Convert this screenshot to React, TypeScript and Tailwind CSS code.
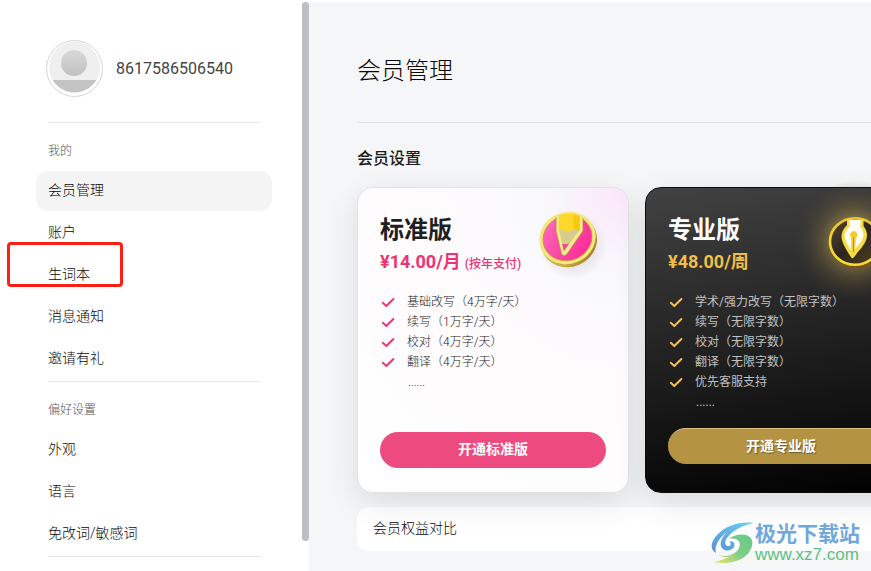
import React, { useState } from 'react';

interface Plan {
  id: string;
  name: string;
  price: string;
  note?: string;
  features: string[];
  action: string;
}

const ACCOUNT_LINKS = ['会员管理', '账户', '生词本', '消息通知', '邀请有礼'];
const PREFERENCE_LINKS = ['外观', '语言', '免改词/敏感词'];

const STANDARD: Plan = {
  id: 'standard',
  name: '标准版',
  price: '¥14.00/月',
  note: '(按年支付)',
  features: ['基础改写（4万字/天）', '续写（1万字/天）', '校对（4万字/天）', '翻译（4万字/天）'],
  action: '开通标准版',
};

const PRO: Plan = {
  id: 'pro',
  name: '专业版',
  price: '¥48.00/周',
  features: [
    '学术/强力改写（无限字数）',
    '续写（无限字数）',
    '校对（无限字数）',
    '翻译（无限字数）',
    '优先客服支持',
  ],
  action: '开通专业版',
};

const Avatar: React.FC = () => (
  <svg viewBox="0 0 57 57" className="h-[57px] w-[57px] shrink-0" aria-hidden="true">
    <defs>
      <linearGradient id="avatarHead" x1="0" y1="0" x2="0" y2="1">
        <stop offset="0" stopColor="#d9d9d9" />
        <stop offset="1" stopColor="#c0c0c0" />
      </linearGradient>
      <clipPath id="avatarClip">
        <circle cx="28.5" cy="27" r="25.5" />
      </clipPath>
    </defs>
    <circle cx="28.5" cy="28.5" r="28" fill="#fff" stroke="#d6d6d6" />
    <g clipPath="url(#avatarClip)">
      <rect width="57" height="57" fill="#efefef" />
      <rect y="40" width="57" height="17" fill="#c4c4c4" />
    </g>
    <circle cx="28" cy="23" r="13" fill="url(#avatarHead)" />
  </svg>
);

const Check: React.FC<{ className: string }> = ({ className }) => (
  <svg viewBox="0 0 16 16" fill="none" className={`h-4 w-4 shrink-0 ${className}`} aria-hidden="true">
    <path d="M2.8 8.8 6.3 12 13.4 5" stroke="currentColor" strokeWidth="1.9" strokeLinecap="round" strokeLinejoin="round" />
  </svg>
);

const PencilMedal: React.FC = () => (
  <svg viewBox="0 0 80 80" className="h-20 w-20" aria-hidden="true">
    <defs>
      <linearGradient id="pinkFace" x1="0" y1="0" x2="1" y2="1">
        <stop offset="0" stopColor="#ff70be" />
        <stop offset="0.5" stopColor="#fb45a5" />
        <stop offset="1" stopColor="#fb2594" />
      </linearGradient>
      <linearGradient id="pinkEdge" x1="0" y1="0" x2="1" y2="1">
        <stop offset="0" stopColor="#e9dc70" />
        <stop offset="0.6" stopColor="#c5a83b" />
        <stop offset="1" stopColor="#8f7420" />
      </linearGradient>
      <radialGradient id="pinkShadow">
        <stop offset="0.4" stopColor="#bba6b0" stopOpacity="0.35" />
        <stop offset="1" stopColor="#bba6b0" stopOpacity="0" />
      </radialGradient>
      <clipPath id="pinkClip">
        <ellipse cx="37.5" cy="38" rx="26" ry="24" transform="rotate(-22 37.5 38)" />
      </clipPath>
    </defs>
    <circle cx="43" cy="46" r="34" fill="url(#pinkShadow)" />
    <ellipse cx="38.8" cy="40.8" rx="28.6" ry="26" transform="rotate(-22 38.8 40.8)" fill="url(#pinkEdge)" />
    <ellipse cx="37.5" cy="38" rx="28.6" ry="26" transform="rotate(-22 37.5 38)" fill="#f2e783" />
    <ellipse cx="37.5" cy="38" rx="24.8" ry="22.4" transform="rotate(-22 37.5 38)" fill="url(#pinkFace)" stroke="#c99335" strokeWidth="0.8" />
    <g clipPath="url(#pinkClip)">
      <path d="M26 12V31L31.5 54Q34 57.5 37 54L53 31V12Z" fill="#f5ea8c" stroke="#b98445" strokeWidth="0.8" />
      <path d="M29 12V30L34 51L49.6 30V12Z" fill="#d8cb8e" />
      <path d="M28.8 12V30Q31 28 34 31Q38 33 41 30Q44 29 49.8 30V12Z" fill="#ffd62a" />
      <path d="M43.5 12V29.5L49.8 30V12Z" fill="#fbc60d" />
      <path d="M32.1 43.5Q35 45 39.2 43.5L34 51Z" fill="#f0449b" />
    </g>
  </svg>
);

const PenMedal: React.FC = () => (
  <svg viewBox="0 0 120 120" className="h-[120px] w-[120px]" aria-hidden="true">
    <defs>
      <radialGradient id="goldGlow">
        <stop offset="0.3" stopColor="#a59154" stopOpacity="0.8" />
        <stop offset="0.6" stopColor="#7b6b3c" stopOpacity="0.4" />
        <stop offset="1" stopColor="#4a4230" stopOpacity="0" />
      </radialGradient>
      <linearGradient id="goldFace" x1="0" y1="0" x2="1" y2="1">
        <stop offset="0" stopColor="#55482f" />
        <stop offset="0.5" stopColor="#2c251d" />
        <stop offset="1" stopColor="#594222" />
      </linearGradient>
      <linearGradient id="goldRim" x1="0" y1="0" x2="0" y2="1">
        <stop offset="0" stopColor="#eec52c" />
        <stop offset="1" stopColor="#f6df38" />
      </linearGradient>
    </defs>
    <circle cx="60" cy="60" r="60" fill="url(#goldGlow)" />
    <ellipse cx="61" cy="62.5" rx="26.5" ry="24.5" fill="#805108" />
    <ellipse cx="60" cy="60.5" rx="25" ry="23.3" fill="url(#goldFace)" stroke="url(#goldRim)" strokeWidth="2.6" />
    <path d="M52 38.5V44Q46 50 46.5 57Q48 65 57 77.5Q59 77 62 72Q73 61 72 53Q71 48 68.5 45V38.5Z" fill="#f6dc42" />
    <path d="M54.5 39V46Q49.5 50 49.5 56Q51 62 56 69V56.5A3.7 3.7 0 1 1 61.5 56.5L60 68Q68 60 68.5 54Q68 49 65.5 46V39Z" fill="#fffdf6" />
    <circle cx="59" cy="53.5" r="3" fill="#f4cb2c" />
    <path d="M58.5 56V71" stroke="#b69124" strokeWidth="1.2" />
  </svg>
);

const NavList: React.FC<{
  items: string[];
  current: string;
  onSelect: (item: string) => void;
}> = ({ items, current, onSelect }) => (
  <ul className="flex flex-col gap-[2px]">
    {items.map((item) => (
      <li key={item} className="relative">
        <button
          type="button"
          onClick={() => onSelect(item)}
          className={`flex h-10 w-full items-center rounded-xl px-3 pb-[2px] text-left text-sm ${
            item === current ? 'bg-[#f4f4f4]' : ''
          }`}
        >
          {item}
        </button>
        {item === '生词本' && (
          <span className="pointer-events-none absolute -left-[29px] -top-[13px] h-[45px] w-[116px] rounded-[4px] border-3 border-[#ff2015]" />
        )}
      </li>
    ))}
  </ul>
);

const PlanCard: React.FC<{ plan: Plan; dark?: boolean }> = ({ plan, dark = false }) => (
  <article
    className={`relative flex min-h-[306px] w-[272px] shrink-0 flex-col rounded-2xl border px-[22px] pt-[25px] shadow-[0_10px_32px_rgba(0,0,0,0.11)] ${
      dark
        ? 'border-[#0c0c0c] bg-[linear-gradient(170deg,#424242,#212121_50%,#000000)] pb-7'
        : 'border-[#e2e2e5] bg-[radial-gradient(circle_at_100%_0%,#fbe5fa_0%,#f8f8fc_20%,#fefbfd_45%,#ffffff_100%)] pb-6'
    }`}
  >
    <div className={dark ? 'absolute -top-[7px] left-[149px]' : 'absolute top-3 left-[172px]'}>
      {dark ? <PenMedal /> : <PencilMedal />}
    </div>
    <h3 className={`relative text-2xl leading-[34px] font-bold ${dark ? 'text-white' : 'text-[#1f1f1f]'}`}>
      {plan.name}
    </h3>
    <p className={`relative text-lg leading-[30px] font-bold ${dark ? 'text-[#f3bd47]' : 'text-[#ed3472]'}`}>
      {plan.price}
      {plan.note && <span className="ml-1 text-xs font-medium">{plan.note}</span>}
    </p>
    <ul className={`relative mt-[15px] text-xs leading-5 ${dark ? 'font-normal text-[#c0c0c0]' : 'text-[#222]'}`}>
      {plan.features.map((feature) => (
        <li key={feature} className="flex items-center gap-[11px] whitespace-nowrap">
          <Check className={dark ? 'text-[#f8c44d]' : 'text-[#ed3472]'} />
          {feature}
        </li>
      ))}
      <li className="pl-7">......</li>
    </ul>
    <button
      type="button"
      className={`relative mt-auto h-9 w-full rounded-full pb-[2px] text-sm font-bold text-white ${
        dark
          ? 'border-t border-[#e2c17c] bg-[#b49442] [text-shadow:1px_1px_1px_rgba(0,0,0,0.4)]'
          : 'bg-[#ed4a80]'
      }`}
    >
      {plan.action}
    </button>
  </article>
);

const SiteBadge: React.FC = () => (
  <a href="#" className="absolute right-[11px] bottom-[7px] z-20 flex items-center">
    <svg viewBox="0 0 44 42" className="h-[42px] w-11" aria-hidden="true">
      <defs>
        <linearGradient id="swirlBlue" x1="1" y1="0" x2="0" y2="1">
          <stop offset="0" stopColor="#68d3f6" />
          <stop offset="1" stopColor="#5c8fd0" />
        </linearGradient>
        <linearGradient id="swirlGreen" x1="0" y1="1" x2="1" y2="0">
          <stop offset="0" stopColor="#ece46c" />
          <stop offset="0.5" stopColor="#7dcd87" />
          <stop offset="1" stopColor="#67c98c" />
        </linearGradient>
      </defs>
      {/* Blue sweep with the inner curl */}
      <path d="M43 1C29 -1 15 4 7 12C0 19 -2 27 5 31C3 24 8 16 16 10C10 16 8 22 11 26C14 30 21 29 23 25C25 21 21 18 18 20C21 21 20 24 17 24C14 24 13 20 16 16C21 9 31 3 43 1Z" fill="url(#swirlBlue)" />
      {/* Green sweep */}
      <path d="M18 17C23 12 34 11 39 15C44 20 41 30 32 36C24 41 12 42 3 40C13 38 25 33 28 26C31 20 26 15 18 17Z" fill="url(#swirlGreen)" />
      <path d="M6 32C11 36 21 34 26 29C21 36 12 37 6 32Z" fill="#aacb6e" />
    </svg>
    <span className="flex flex-col">
      <span className="text-[21px] leading-6 font-bold text-[#70a7dc]">极光下载站</span>
      <span className="font-['Liberation_Sans',sans-serif] text-[17px] leading-[18px] font-normal text-[#5fc07f]">www.xz7.com</span>
    </span>
  </a>
);

const App: React.FC = () => {
  const [current, setCurrent] = useState('会员管理');

  return (
    <div className="relative flex h-screen overflow-hidden bg-white pt-[2px] font-[Roboto,'Noto_Sans_CJK_SC',sans-serif] font-light text-[#080808]">
      <aside className="w-[302px] shrink-0 pr-[30px] pl-9">
        <div className="mr-3 ml-3 border-b border-[#e8e8e8] pt-[38px] pb-[25px]">
          <div className="-ml-[2px] flex items-center gap-[13px]">
            <Avatar />
            <span className="text-base font-normal text-[#444]">8617586506540</span>
          </div>
        </div>
        <nav>
          <h2 className="mt-[18px] mb-[10px] ml-3 text-xs leading-5 text-[#555]">我的</h2>
          <NavList items={ACCOUNT_LINKS} current={current} onSelect={setCurrent} />
          <hr className="mx-3 mt-[2px] border-[#e8e8e8]" />
          <h2 className="mt-[18px] mb-[10px] ml-3 text-xs leading-5 text-[#555]">偏好设置</h2>
          <NavList items={PREFERENCE_LINKS} current={current} onSelect={setCurrent} />
          <hr className="mx-3 mt-[2px] border-[#e8e8e8]" />
        </nav>
      </aside>

      {/* Sidebar scroll track */}
      <div className="w-[7px] shrink-0 pb-[30px]">
        <div className="h-full rounded-full bg-[#bdbec3]" />
      </div>

      <main className="min-w-0 flex-1 overflow-hidden bg-[#f4f6f8] pl-12">
        <h1 className="border-b border-[#e1e2e5] pt-[51px] pb-[33px] text-2xl leading-9">会员管理</h1>
        <h2 className="mt-6 text-base leading-6 font-medium text-[#1c1c1c]">会员设置</h2>
        <section className="relative z-10 mt-4 flex gap-4">
          <PlanCard plan={STANDARD} />
          <PlanCard plan={PRO} dark />
        </section>
        <section className="mt-[14px] rounded-l-xl bg-white px-4 pt-[9px] pb-[11px] text-sm leading-6">
          会员权益对比
        </section>
      </main>

      <SiteBadge />
    </div>
  );
};

export default App;
